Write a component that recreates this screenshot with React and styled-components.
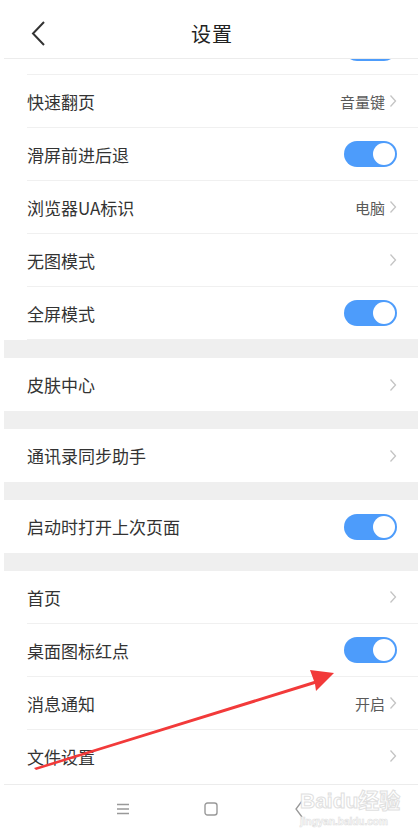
import React from 'react';
import styled, { createGlobalStyle } from 'styled-components';

const GlobalStyle = createGlobalStyle`
  html, body {
    margin: 0;
    padding: 0;
    background: #fff;
  }
  body {
    font-family: "Noto Sans CJK SC", "Noto Sans", sans-serif;
    color: #333;
  }
`;

const Screen = styled.div`
  position: relative;
  width: 418px;
  height: 835px;
  overflow: hidden;
  background: #fff;
  padding-left: 4px;
  box-sizing: border-box;
  display: flex;
  flex-direction: column;
`;

const Header = styled.div`
  height: 59px;
  flex: none;
  display: flex;
  align-items: center;
  justify-content: center;
  position: relative;
  padding-top: 9px;
  border-bottom: 1px solid #ececec;
  box-sizing: border-box;
`;

const BackButton = styled.div`
  position: absolute;
  left: 24px;
  top: 20px;
  width: 20px;
  height: 27px;
`;

const Title = styled.h1`
  margin: 0 0 0 2px;
  font-size: 20px;
  font-weight: 400;
  color: #222;
  letter-spacing: 1px;
`;

const List = styled.div`
  flex: 1;
  overflow: hidden;
  display: flex;
  flex-direction: column;
`;

const CutRow = styled.div`
  height: 16px;
  flex: none;
  position: relative;
  border-bottom: 1px solid #f0f0f0;
  margin-left: 23px;
  box-sizing: border-box;
`;

const CutToggle = styled.div`
  position: absolute;
  right: 21px;
  top: -24px;
  width: 53px;
  height: 26px;
  border-radius: 13px;
  background: #4d9cfb;
`;

const Row = styled.div`
  height: 53px;
  flex: none;
  display: flex;
  align-items: center;
  margin-left: 23px;
  padding-right: 21px;
  box-sizing: border-box;
  border-bottom: ${({ $last }) => ($last ? 'none' : '1px solid #f0f0f0')};
`;

const Label = styled.span`
  flex: 1;
  font-size: 17px;
  color: #333;
`;

const Value = styled.span`
  font-size: 15px;
  color: #5a5a5a;
  margin-right: 4px;
`;

const Gap = styled.div`
  height: 18px;
  flex: none;
  background: #efefef;
`;

const Switch = styled.div`
  width: 53px;
  height: 26px;
  border-radius: 13px;
  background: ${({ $on }) => ($on ? '#4d9cfb' : '#ddd')};
  position: relative;
  &::after {
    content: '';
    position: absolute;
    top: 2px;
    right: 2px;
    width: 22px;
    height: 22px;
    border-radius: 50%;
    background: #fff;
  }
`;

const NavBar = styled.div`
  height: 48px;
  flex: none;
  border-top: 1px solid #ececec;
  margin-top: 6px;
  display: flex;
  align-items: center;
  justify-content: center;
  gap: 70px;
  padding-bottom: 2px;
`;

const NavIcon = styled.div`
  width: 18px;
  height: 18px;
  display: flex;
  align-items: center;
  justify-content: center;
`;

const Watermark = styled.div`
  position: absolute;
  left: 300px;
  top: 790px;
  color: #fff;
  -webkit-text-stroke: 1px #e0e0e0;
  font-family: "Liberation Sans", Arial, sans-serif;
  line-height: 1;
  white-space: nowrap;
  pointer-events: none;
`;

const MarkTop = styled.div`
  font-size: 21px;
  font-weight: 700;
  font-family: "Liberation Sans", "Noto Sans CJK SC", sans-serif;
`;

const MarkBottom = styled.div`
  font-size: 10px;
  font-weight: 700;
  margin-top: 6px;
  -webkit-text-stroke: 0.6px #e0e0e0;
`;

const Arrow = styled.svg`
  position: absolute;
  left: 0;
  top: 0;
  pointer-events: none;
`;

const Chevron = () => (
  <svg width="8" height="14" viewBox="0 0 8 14">
    <path d="M1.5 1.5 L6.5 7 L1.5 12.5" fill="none" stroke="#c4c4c4" strokeWidth="1.3" />
  </svg>
);

const SettingRow = ({ label, value, toggle, last }) => (
  <Row $last={last}>
    <Label>{label}</Label>
    {toggle ? (
      <Switch $on />
    ) : (
      <>
        {value && <Value>{value}</Value>}
        <Chevron />
      </>
    )}
  </Row>
);

const sections = [
  [
    { label: '快速翻页', value: '音量键' },
    { label: '滑屏前进后退', toggle: true },
    { label: '浏览器UA标识', value: '电脑' },
    { label: '无图模式' },
    { label: '全屏模式', toggle: true },
  ],
  [{ label: '皮肤中心' }],
  [{ label: '通讯录同步助手' }],
  [{ label: '启动时打开上次页面', toggle: true }],
  [
    { label: '首页' },
    { label: '桌面图标红点', toggle: true },
    { label: '消息通知', value: '开启' },
    { label: '文件设置' },
  ],
];

export default function App() {
  return (
    <>
      <GlobalStyle />
      <Screen>
        <Header>
          <BackButton>
            <svg width="20" height="27" viewBox="0 0 20 27">
              <path d="M16 2 L5 13.5 L16 25" fill="none" stroke="#333" strokeWidth="2" />
            </svg>
          </BackButton>
          <Title>设置</Title>
        </Header>
        <List>
          <CutRow>
            <CutToggle />
          </CutRow>
          {sections.map((items, si) => (
            <React.Fragment key={si}>
              {si > 0 && <Gap />}
              {items.map((item, i) => (
                <SettingRow key={item.label} {...item} last={si > 0 && i === items.length - 1 && si < sections.length - 1} />
              ))}
            </React.Fragment>
          ))}
        </List>
        <NavBar>
          <NavIcon>
            <svg width="14" height="12" viewBox="0 0 14 12">
              <path d="M1 1.5 H13 M1 6 H13 M1 10.5 H13" stroke="#999" strokeWidth="1.3" />
            </svg>
          </NavIcon>
          <NavIcon>
            <svg width="14" height="14" viewBox="0 0 14 14">
              <rect x="1" y="1" width="12" height="12" rx="2.5" fill="none" stroke="#999" strokeWidth="1.4" />
            </svg>
          </NavIcon>
          <NavIcon>
            <svg width="10" height="18" viewBox="0 0 10 18">
              <path d="M8 1 L2 9 L8 17" fill="none" stroke="#999" strokeWidth="1.3" />
            </svg>
          </NavIcon>
        </NavBar>
        <Watermark>
          <MarkTop>Baidu经验</MarkTop>
          <MarkBottom>jingyan.baidu.com</MarkBottom>
        </Watermark>
        <Arrow width="418" height="835" viewBox="0 0 418 835">
          <polygon points="34,768 314,681 310,670 334,673 316,691 315,684 36,770" fill="#f23a3a" />
        </Arrow>
      </Screen>
    </>
  );
}
